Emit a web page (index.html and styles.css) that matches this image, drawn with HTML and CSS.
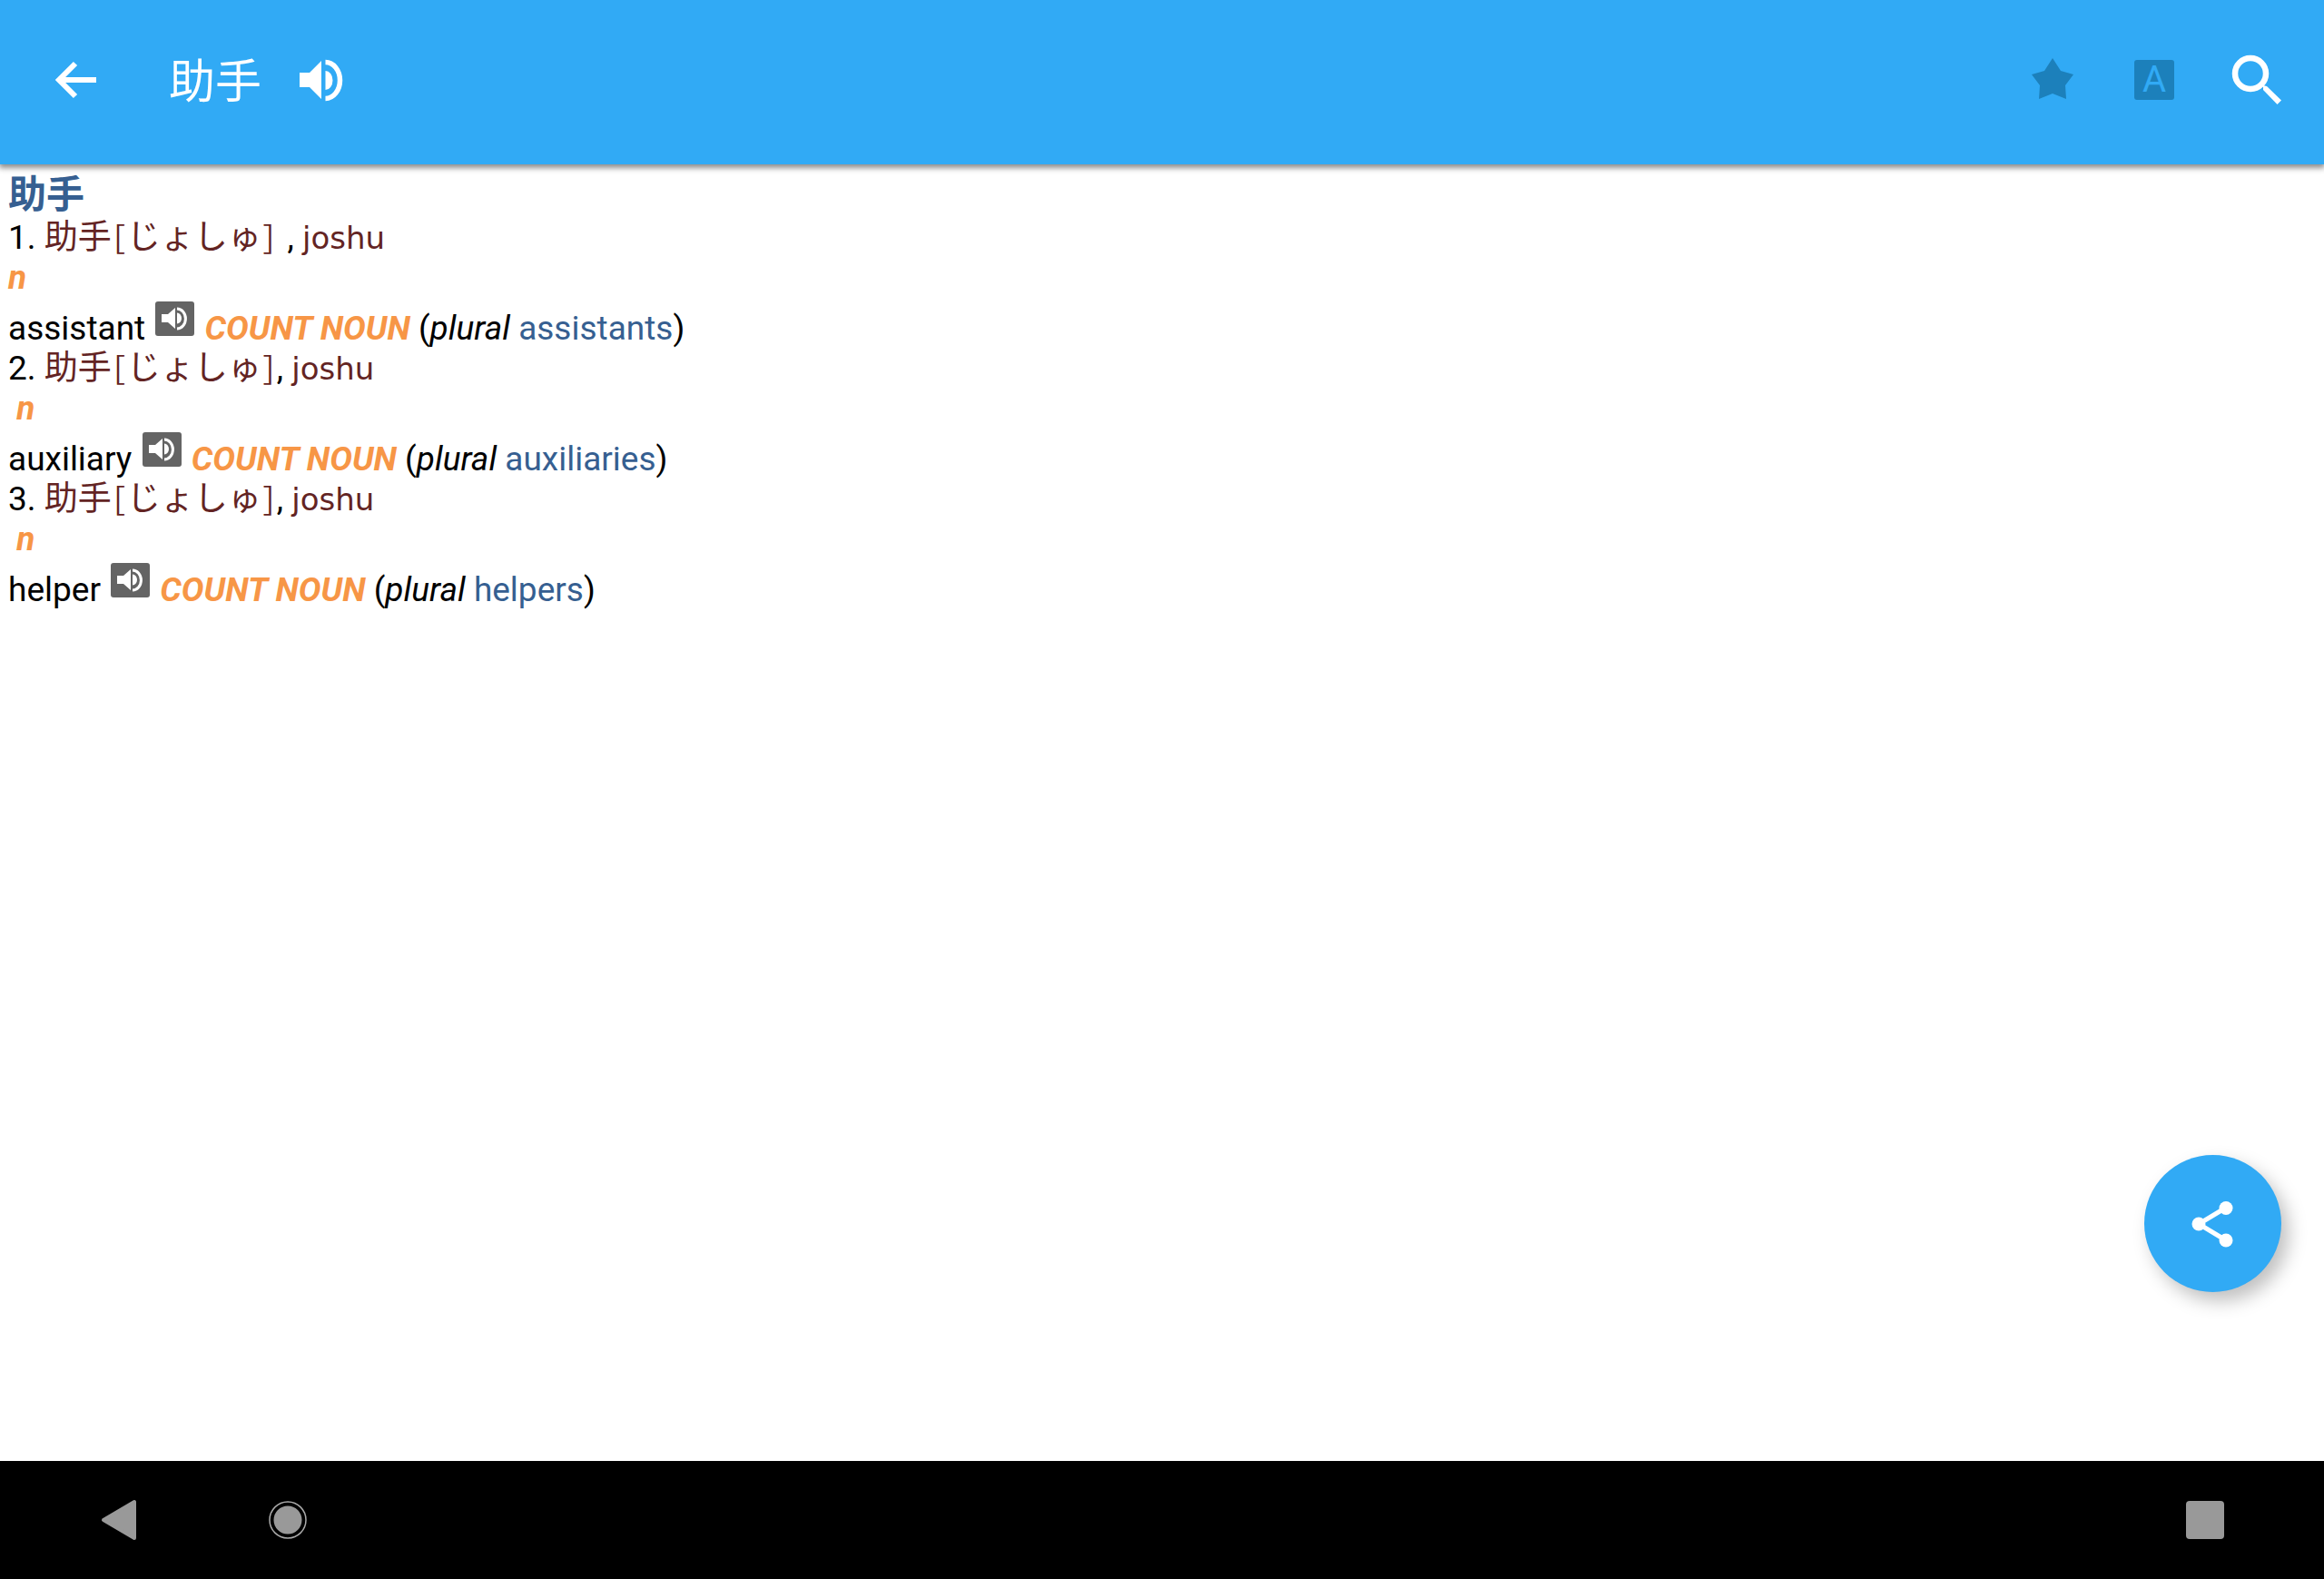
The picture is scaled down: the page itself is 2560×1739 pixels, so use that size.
FILE: index.html
```html
<!DOCTYPE html>
<html lang="en">
<head>
<meta charset="utf-8">
<title>助手</title>
<link rel="stylesheet" href="styles.css">
</head>
<body>
<header class="toolbar">
  <button class="icon-button back" aria-label="Back">
    <svg width="68" height="68" viewBox="0 0 68 68" fill="none" stroke="#fff" stroke-width="6"><path d="M33 16 15 34l18 18M14 34h42"/></svg>
  </button>
  <h1 class="title" lang="ja">助手</h1>
  <button class="icon-button speak" aria-label="Listen">
    <svg width="68" height="68" viewBox="0 0 68 68"><path fill="#fff" d="M10 26h11l13-13v42L21 42H10zM38.500 24a8 10.500 0 0 1 0 21z"/><path d="M38.500 14.500a16 20 0 0 1 0 40" fill="none" stroke="#fff" stroke-width="5.500"/></svg>
  </button>
  <div class="actions">
    <button class="icon-button action" aria-label="Favourite">
      <svg width="80" height="80" viewBox="0 0 80 80"><path fill="#1c80bb" d="m40 16 9 14 14 4-9 12 1 15-15-6-15 6 1-15-9-12 14-4z"/></svg>
    </button>
    <button class="icon-button action" aria-label="Text size"><span class="letter-tile">A</span></button>
    <button class="icon-button action" aria-label="Search">
      <svg width="80" height="80" viewBox="0 0 80 80" fill="none" stroke="#fff"><circle cx="34" cy="33" r="17" stroke-width="6.500"/><path d="m48 46 4 1 16 15.500-4.500 4.500L48 51z" fill="#fff" stroke="none"/></svg>
    </button>
  </div>
</header>
<main class="content">
  <article class="entry">
    <h2 class="headword" lang="ja">助手</h2>
    <section class="sense">
      <p class="line">1. <span class="reading" lang="ja">助手<span class="bracket">[</span>じょしゅ<span class="bracket">]</span> </span>, <span class="romaji">joshu</span></p>
      <p class="line"><em class="grammar">n</em></p>
      <p class="line">assistant <button class="sound" aria-label="Listen to assistant"><svg width="43" height="38" viewBox="0 0 43 38"><path fill="#fff" d="M7 14h7l8-7v23l-8-7H7zM24 12.500a5 6 0 0 1 0 12z"/><path d="M24 8a9 10.500 0 0 1 0 22" fill="none" stroke="#fff" stroke-width="3"/></svg></button> <em class="grammar">COUNT NOUN</em> (<em>plural</em> <a class="form" href="#assistants">assistants</a>)</p>
    </section>
    <section class="sense">
      <p class="line">2. <span class="reading" lang="ja">助手<span class="bracket">[</span>じょしゅ<span class="bracket">]</span></span>, <span class="romaji">joshu</span></p>
      <p class="line">&nbsp;<em class="grammar">n</em></p>
      <p class="line">auxiliary <button class="sound" aria-label="Listen to auxiliary"><svg width="43" height="38" viewBox="0 0 43 38"><path fill="#fff" d="M7 14h7l8-7v23l-8-7H7zM24 12.500a5 6 0 0 1 0 12z"/><path d="M24 8a9 10.500 0 0 1 0 22" fill="none" stroke="#fff" stroke-width="3"/></svg></button> <em class="grammar">COUNT NOUN</em> (<em>plural</em> <a class="form" href="#auxiliaries">auxiliaries</a>)</p>
    </section>
    <section class="sense">
      <p class="line">3. <span class="reading" lang="ja">助手<span class="bracket">[</span>じょしゅ<span class="bracket">]</span></span>, <span class="romaji">joshu</span></p>
      <p class="line">&nbsp;<em class="grammar">n</em></p>
      <p class="line">helper <button class="sound" aria-label="Listen to helper"><svg width="43" height="38" viewBox="0 0 43 38"><path fill="#fff" d="M7 14h7l8-7v23l-8-7H7zM24 12.500a5 6 0 0 1 0 12z"/><path d="M24 8a9 10.500 0 0 1 0 22" fill="none" stroke="#fff" stroke-width="3"/></svg></button> <em class="grammar">COUNT NOUN</em> (<em>plural</em> <a class="form" href="#helpers">helpers</a>)</p>
    </section>
  </article>
  <button class="share" aria-label="Share">
    <svg width="68" height="68" viewBox="0 0 68 68" fill="#fff"><path d="M48 16 18 34l30 18" fill="none" stroke="#fff" stroke-width="5"/><circle cx="48" cy="16.500" r="7.500"/><circle cx="18" cy="34" r="7.500"/><circle cx="48" cy="52" r="7.500"/></svg>
  </button>
</main>
<nav class="system-bar" aria-label="System">
  <button class="icon-button" aria-label="Back">
    <svg width="46" height="46" viewBox="0 0 46 46"><path d="M40 3v40L6 23z" fill="#999" stroke="#999" stroke-width="4" stroke-linejoin="round"/></svg>
  </button>
  <button class="icon-button" aria-label="Home">
    <svg width="46" height="46" viewBox="0 0 46 46"><circle cx="23" cy="23" r="15.500" fill="#999"/><circle cx="23" cy="23" r="20" fill="none" stroke="#aaa" stroke-width="1.500"/></svg>
  </button>
  <button class="icon-button recent" aria-label="Recent apps">
    <svg width="46" height="46" viewBox="0 0 46 46"><rect x="2" y="2" width="42" height="42" rx="4" fill="#999"/></svg>
  </button>
</nav>
</body>
</html>
```
FILE: styles.css
```css
* {
  box-sizing: border-box;
}

body {
  margin: 0;
  min-height: 100vh;
  display: flex;
  flex-direction: column;
  background: #fff;
  color: #000;
  font: 37px/44px Roboto, "Noto Sans CJK JP", sans-serif;
}

button {
  border: 0;
  padding: 0;
  background: none;
  font: inherit;
  cursor: pointer;
}

h1,
h2,
p {
  margin: 0;
}

svg {
  display: block;
}

.toolbar {
  position: relative;
  display: flex;
  align-items: center;
  height: 181px;
  padding: 0 35px 5px 50px;
  background: #31aaf5;
  box-shadow: 0 3px 6px 1px rgba(0, 0, 0, 0.45);
}

.icon-button {
  display: flex;
  align-items: center;
  justify-content: center;
}

.title {
  margin: 0 32px 0 68px;
  padding-top: 6px;
  color: #fff;
  font-size: 51px;
  line-height: 64px;
  font-weight: 400;
}

.actions {
  display: flex;
  gap: 32px;
  margin-left: auto;
}

.action {
  width: 80px;
  height: 80px;
}

.letter-tile {
  width: 44px;
  height: 44px;
  border-radius: 3px;
  background: #1c80bb;
  color: #31aaf5;
  font-size: 40px;
  line-height: 44px;
}

.content {
  position: relative;
  flex: 1;
}

.entry {
  padding: 8px 9px;
}

.headword {
  color: #365f91;
  font-size: 42px;
  line-height: 51px;
  font-weight: 700;
}

.reading,
.romaji {
  color: #632423;
  font-family: "DejaVu Sans", "Noto Sans CJK JP", sans-serif;
  line-height: 34px;
}

.romaji {
  font-size: 34px;
}

.bracket {
  font-family: "Noto Sans Mono CJK JP", "Noto Sans CJK JP", monospace;
  font-size: 34px;
}

.grammar {
  color: #f79646;
  font-weight: 700;
}

.form {
  color: #365f91;
  text-decoration: none;
}

.sound {
  margin: 4px 2px 0;
  border-radius: 3px;
  background: #646464;
  vertical-align: 4px;
}

.share {
  position: absolute;
  right: 47px;
  bottom: 186px;
  display: flex;
  align-items: center;
  justify-content: center;
  width: 151px;
  height: 151px;
  border-radius: 50%;
  background: #31aaf5;
  box-shadow: 8px 10px 20px rgba(0, 0, 0, 0.25);
}

.system-bar {
  display: flex;
  align-items: center;
  gap: 140px;
  height: 130px;
  padding: 0 108px;
  background: #000;
}

.recent {
  margin-left: auto;
}
```
